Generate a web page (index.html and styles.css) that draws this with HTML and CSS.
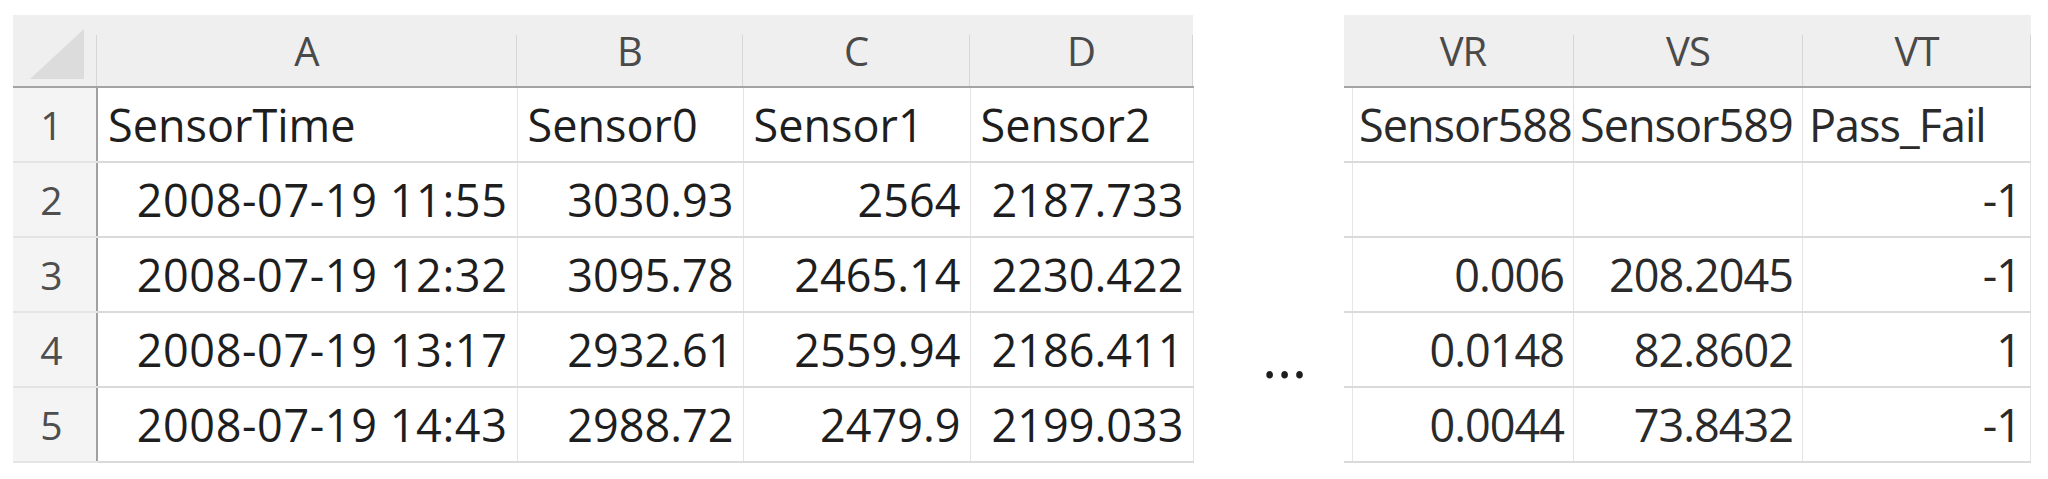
FILE: index.html
```html
<!DOCTYPE html>
<html lang="en">
<head>
    <meta charset="UTF-8">
    <meta name="viewport" content="width=device-width, initial-scale=1.0">
    <title>Sensor sheet</title>
    <link rel="stylesheet" href="styles.css">
</head>
<body>
    <div class="sheet">
        <table class="grid grid-left">
            <colgroup>
                <col class="w-rownum">
                <col class="w-a">
                <col class="w-b">
                <col class="w-c">
                <col class="w-d">
            </colgroup>
            <thead>
                <tr>
                    <th class="corner">
                        <svg width="70" height="60" viewBox="0 0 70 60"><polygon points="10,58 64,58 64,8" fill="#dcdcdc"/></svg>
                    </th>
                    <th>A</th>
                    <th>B</th>
                    <th>C</th>
                    <th>D</th>
                </tr>
            </thead>
            <tbody>
                <tr>
                    <td class="rownum">1</td>
                    <td class="txt">SensorTime</td>
                    <td class="txt">Sensor0</td>
                    <td class="txt">Sensor1</td>
                    <td class="txt">Sensor2</td>
                </tr>
                <tr>
                    <td class="rownum">2</td>
                    <td class="date">2008-07-19 11:55</td>
                    <td>3030.93</td>
                    <td>2564</td>
                    <td>2187.733</td>
                </tr>
                <tr>
                    <td class="rownum">3</td>
                    <td class="date">2008-07-19 12:32</td>
                    <td>3095.78</td>
                    <td>2465.14</td>
                    <td>2230.422</td>
                </tr>
                <tr>
                    <td class="rownum">4</td>
                    <td class="date">2008-07-19 13:17</td>
                    <td>2932.61</td>
                    <td>2559.94</td>
                    <td>2186.411</td>
                </tr>
                <tr>
                    <td class="rownum">5</td>
                    <td class="date">2008-07-19 14:43</td>
                    <td>2988.72</td>
                    <td>2479.9</td>
                    <td>2199.033</td>
                </tr>
            </tbody>
        </table>

        <div class="skip"><span class="dots">…</span></div>

        <table class="grid grid-right">
            <colgroup>
                <col class="w-sliver">
                <col class="w-vr">
                <col class="w-vs">
                <col class="w-vt">
            </colgroup>
            <thead>
                <tr>
                    <th class="sliver"></th>
                    <th>VR</th>
                    <th>VS</th>
                    <th>VT</th>
                </tr>
            </thead>
            <tbody>
                <tr>
                    <td class="sliver"></td>
                    <td class="txt">Sensor588</td>
                    <td class="txt">Sensor589</td>
                    <td class="txt">Pass_Fail</td>
                </tr>
                <tr>
                    <td class="sliver"></td>
                    <td></td>
                    <td></td>
                    <td>-1</td>
                </tr>
                <tr>
                    <td class="sliver"></td>
                    <td>0.006</td>
                    <td>208.2045</td>
                    <td>-1</td>
                </tr>
                <tr>
                    <td class="sliver"></td>
                    <td>0.0148</td>
                    <td>82.8602</td>
                    <td>1</td>
                </tr>
                <tr>
                    <td class="sliver"></td>
                    <td>0.0044</td>
                    <td>73.8432</td>
                    <td>-1</td>
                </tr>
            </tbody>
        </table>
    </div>
</body>
</html>
```

FILE: styles.css
```css
body { margin: 0; background: #fff; font-family: "Open Sans", "Noto Sans", sans-serif; color: #1e1e1e; }
.sheet { display: flex; align-items: flex-start; padding: 15px 0 0 13px; }

.grid { border-collapse: collapse; table-layout: fixed; }
.grid-left { width: 1180px; }
.grid-right { width: 687px; letter-spacing: -1px; color: #2a2a2a; }

.w-rownum { width: 84px; }
.w-a { width: 420px; }
.w-b { width: 226px; }
.w-c { width: 227px; }
.w-d { width: 223px; }
.w-sliver { width: 9px; }
.w-vr { width: 221px; }
.w-vs { width: 229px; }
.w-vt { width: 228px; }

.grid th {
    height: 71px; padding: 0; font-weight: 400; font-size: 40px; color: #4a4a4a;
    background: linear-gradient(#d6d6d6, #d6d6d6) right bottom / 1px 72% no-repeat, #efefef;
    border-bottom: 2px solid #a3a3a3; text-align: center;
}
.grid th.corner { padding: 0; vertical-align: middle; line-height: 0; }
.grid th.sliver { background: #efefef; }

.grid td {
    height: 73px; padding: 0 9px; font-size: 45px; white-space: nowrap; overflow: hidden;
    text-align: right; border-bottom: 2px solid #dadada; border-right: 1px solid #e3e3e3;
}
.grid td.txt { text-align: left; padding-left: 10px; }
.grid td.date { letter-spacing: 0.6px; }
.grid-right td.txt { padding-left: 6px; }
.grid td.rownum {
    padding: 0 6px 0 0; text-align: center; font-size: 39px; color: #4e4e4e;
    background: #f4f4f4; border-bottom-color: #e4e4e4; border-right: 2px solid #a0a0a0;
}
.grid td.sliver { padding: 0; border-right: 1px solid #e6e6e6; }

.skip { width: 118px; padding: 303px 0 0 32px; display: flex; justify-content: center; }
.dots { font-size: 58px; line-height: 75px; color: #1e1e1e; }
```
